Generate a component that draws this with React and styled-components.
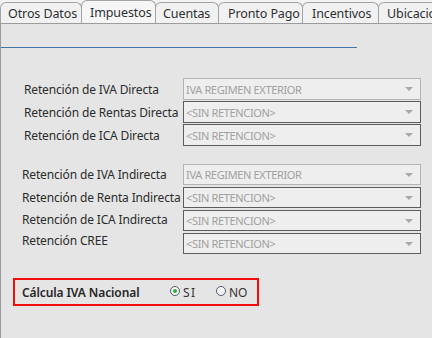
import React from "react";
import styled, { createGlobalStyle } from "styled-components";

const Global = createGlobalStyle`
  html, body { margin: 0; padding: 0; }
  body {
    width: 432px; height: 338px; overflow: hidden;
    background: #f2f2f2;
    font-family: "Noto Sans", "Open Sans", sans-serif;
  }
`;

const Page = styled.div`
  width: 432px;
  height: 338px;
  display: flex;
  flex-direction: column;
  overflow: hidden;
`;

const TabBar = styled.div`
  display: flex;
  align-items: flex-end;
  height: 23px;
  border-bottom: 1px solid #9c9c9c;
  background: #f4f4f4;
  flex: none;
`;

const Tab = styled.div`
  flex: none;
  box-sizing: border-box;
  width: ${(p) => p.$w}px;
  height: ${(p) => (p.$active ? 23 : 21)}px;
  padding-left: ${(p) => p.$pl}px;
  display: flex;
  align-items: center;
  border: 1px solid #a4a4a4;
  border-bottom: none;
  margin-right: -1px;
  border-radius: 6px 6px 0 0;
  background: ${(p) => (p.$active ? "#f6f6f6" : "#f1f1f1")};
  color: #2e3033;
  font-size: 12.5px;
  letter-spacing: -0.1px;
  white-space: nowrap;
  overflow: hidden;
`;

const Panel = styled.div`
  flex: 1;
  background: #e5e5e5;
  border-left: 1px solid #9a9a9a;
  display: flex;
  flex-direction: column;
`;

const Rule = styled.div`
  width: 356px;
  height: 1px;
  background: #3b77ad;
  margin-top: 23px;
`;

const FieldGrid = styled.div`
  display: grid;
  grid-template-columns: ${(p) => 183 - p.$left}px 238px;
  grid-auto-rows: ${(p) => p.$rowH}px;
  row-gap: ${(p) => p.$gap}px;
  margin-top: ${(p) => p.$top}px;
  padding-left: ${(p) => p.$left - 1}px;
  align-items: center;
`;

const Label = styled.div`
  font-size: 12px;
  letter-spacing: -0.15px;
  color: #2c2c2c;
  white-space: nowrap;
  margin-bottom: ${(p) => p.$lift || 0}px;
`;

const Combo = styled.div`
  box-sizing: border-box;
  height: 100%;
  border: 1px solid ${(p) => (p.$light ? "#b4b4b4" : "#5c5c5c")};
  background: #eeeeee;
  display: flex;
  align-items: center;
  justify-content: space-between;
  padding: 0 7px 0 2px;
  font-size: 11px;
  color: #a0a0a0;
  letter-spacing: -0.35px;
  white-space: nowrap;
`;

const Arrow = styled.span`
  width: 0;
  height: 0;
  border-left: 4px solid transparent;
  border-right: 4px solid transparent;
  border-top: 4px solid #a8a8a8;
`;

const OptionBox = styled.div`
  margin-top: 24px;
  margin-left: 12px;
  width: 246px;
  height: 28px;
  box-sizing: border-box;
  border: 2px solid #f50d0d;
  display: flex;
  align-items: center;
  padding-left: 7px;
`;

const OptionLabel = styled.div`
  font-size: 12px;
  font-weight: 600;
  letter-spacing: -0.1px;
  color: #262626;
  width: 148px;
  white-space: nowrap;
`;

const Radio = styled.div`
  display: flex;
  align-items: center;
  gap: 3px;
  width: ${(p) => p.$w}px;
  font-size: 12px;
  color: #333;
  letter-spacing: ${(p) => p.$ls || 0}px;
`;

const Dot = styled.span`
  box-sizing: border-box;
  width: 10px;
  height: 10px;
  border-radius: 50%;
  border: 1px solid #4d5a70;
  background: #f7f7f7;
  display: flex;
  align-items: center;
  justify-content: center;
  margin-top: -2px;
  &::after {
    content: "";
    width: 4px;
    height: 4px;
    border-radius: 50%;
    background: ${(p) => (p.$on ? "#2eaa3e" : "transparent")};
  }
`;

const tabs = [
  { t: "Otros Datos", w: 82, pl: 7 },
  { t: "Impuestos", w: 75, pl: 8, active: true },
  { t: "Cuentas", w: 64, pl: 7 },
  { t: "Pronto Pago", w: 85, pl: 9 },
  { t: "Incentivos", w: 77, pl: 9 },
  { t: "Ubicacion", w: 70, pl: 8 },
];

const direct = [
  { l: "Retención de IVA Directa", v: "IVA REGIMEN EXTERIOR", light: true },
  { l: "Retención de Rentas Directa", v: "<SIN RETENCION>" },
  { l: "Retención de ICA Directa", v: "<SIN RETENCION>" },
];

const indirect = [
  { l: "Retención de IVA Indirecta", v: "IVA REGIMEN EXTERIOR", light: true },
  { l: "Retención de Renta Indirecta", v: "<SIN RETENCION>" },
  { l: "Retención de ICA Indirecta", v: "<SIN RETENCION>", lift: 3 },
  { l: "Retención CREE", v: "<SIN RETENCION>", lift: 6 },
];

export default function App() {
  return (
    <Page>
      <Global />
      <TabBar>
        {tabs.map((t) => (
          <Tab key={t.t} $w={t.w} $pl={t.pl} $active={t.active}>
            {t.t}
          </Tab>
        ))}
      </TabBar>
      <Panel>
        <Rule />
        <FieldGrid $left={24} $rowH={22} $gap={1} $top={30}>
          {direct.map((r) => (
            <React.Fragment key={r.l}>
              <Label>{r.l}</Label>
              <Combo $light={r.light}>
                <span>{r.v}</span>
                <Arrow />
              </Combo>
            </React.Fragment>
          ))}
        </FieldGrid>
        <FieldGrid $left={22} $rowH={21} $gap={2} $top={18}>
          {indirect.map((r) => (
            <React.Fragment key={r.l}>
              <Label $lift={r.lift}>{r.l}</Label>
              <Combo $light={r.light}>
                <span>{r.v}</span>
                <Arrow />
              </Combo>
            </React.Fragment>
          ))}
        </FieldGrid>
        <OptionBox>
          <OptionLabel>Cálcula IVA Nacional</OptionLabel>
          <Radio $w={46} $ls={1.5}>
            <Dot $on />
            SI
          </Radio>
          <Radio>
            <Dot />
            NO
          </Radio>
        </OptionBox>
      </Panel>
    </Page>
  );
}
